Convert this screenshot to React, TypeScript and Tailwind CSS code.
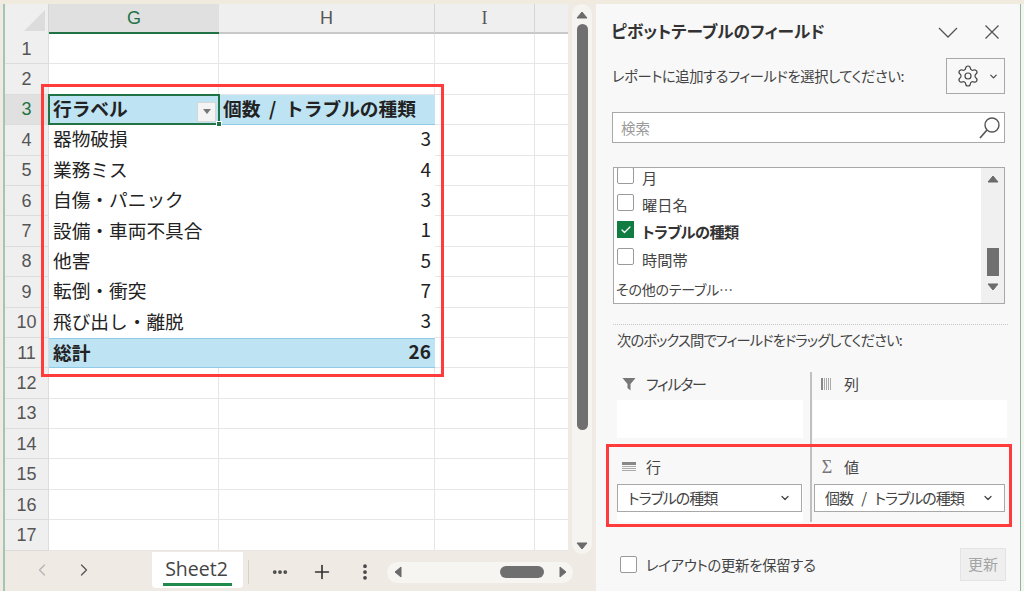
import React from "react";
import { ChevronDown, ChevronLeft, ChevronRight, Plus, MoreVertical, MoreHorizontal, Settings, Check } from "lucide-react";

const font = "font-['Noto_Sans_CJK_JP','Noto_Sans',sans-serif]";
const rows: [string, string | null, "h" | "b" | "t" | ""][] = [
  ["", null, ""],
  ["", null, ""],
  ["行ラベル", "個数 / トラブルの種類", "h"],
  ["器物破損", "3", "b"],
  ["業務ミス", "4", "b"],
  ["自傷・パニック", "3", "b"],
  ["設備・車両不具合", "1", "b"],
  ["他害", "5", "b"],
  ["転倒・衝突", "7", "b"],
  ["飛び出し・離脱", "3", "b"],
  ["総計", "26", "t"],
  ["", null, ""],
  ["", null, ""],
  ["", null, ""],
  ["", null, ""],
  ["", null, ""],
  ["", null, ""],
];

function Tri({ d, className }: { d: "u" | "d" | "l" | "r"; className?: string }) {
  const p = { u: "M1 9 L6 3 L11 9 Z", d: "M1 3 L11 3 L6 9 Z", l: "M9 1 L9 11 L3 6 Z", r: "M3 1 L3 11 L9 6 Z" }[d];
  return (
    <svg width="12" height="12" viewBox="0 0 12 12" className={className}>
      <path d={p} fill="#6b6b6b" stroke="#6b6b6b" strokeLinejoin="round" />
    </svg>
  );
}

function Grid() {
  return (
    <div className="relative w-[563px] bg-white">
      <div className="flex h-[30px]">
        <div className="relative w-[44px] shrink-0 bg-[#efefef] border-r border-[#d5d5d5]">
          <svg width="21" height="21" viewBox="0 0 21 21" className="absolute right-[3px] bottom-[3px]">
            <path d="M21 0 V21 H0 Z" fill="#dcdcdc" />
          </svg>
        </div>
        <div className="w-[170px] shrink-0 flex items-center justify-center bg-[#e0e0e0] border-b-2 border-[#217346] text-[18px] text-[#217346] font-['Liberation_Sans']">G</div>
        <div className="w-[216px] shrink-0 flex items-center justify-center bg-[#efefef] border-b-2 border-[#c8c8c8] border-r border-r-[#d5d5d5] text-[18px] text-[#555] font-['Liberation_Sans']">H</div>
        <div className="w-[100px] shrink-0 flex items-center justify-center bg-[#efefef] border-b-2 border-[#c8c8c8] border-r border-r-[#d5d5d5] text-[18px] text-[#555] font-['Liberation_Serif']">I</div>
        <div className="flex-1 bg-[#efefef] border-b-2 border-[#c8c8c8]" />
      </div>
      {rows.map((r, i) => {
        const kind = r[2];
        const active = kind === "h";
        const gCell =
          kind === "h"
            ? "bg-[#bee3f3] font-bold border-b border-[#8fcbe6] pb-[2px]"
            : kind === "t"
              ? "bg-[#bee3f3] font-bold border-y border-[#8fcbe6] pb-[3px]"
              : kind === "b"
                ? "pb-[4px]"
                : "border-r border-b border-[#e6e6e6]";
        const hCell =
          kind === "h"
            ? "bg-[#bee3f3] font-bold justify-start pl-[4px] text-[18.7px] [word-spacing:4.5px] border-b border-[#8fcbe6] pb-[2px]"
            : kind === "t"
              ? "bg-[#bee3f3] font-bold justify-end pr-[4px] text-[19px] border-y border-[#8fcbe6] pb-[3px]"
              : kind === "b"
                ? "justify-end pr-[4px] text-[19px] pb-[4px]"
                : "border-r border-b border-[#e6e6e6]";
        return (
          <div key={i} className="flex h-[30.4px]">
            <div className={`w-[44px] shrink-0 flex items-center justify-center pt-[1px] border-b border-r border-[#dcdcdc] text-[18px] font-['Liberation_Sans'] ${active ? "bg-[#e0e0e0] text-[#217346] border-r-[#217346]" : "bg-[#efefef] text-[#555]"}`}>{i + 1}</div>
            <div className={`relative w-[170px] shrink-0 flex items-center pl-[4px] text-[18.7px] text-[#222] ${gCell} ${font}`}>
              {r[0]}
              {active && (
                <>
                  <div className="absolute inset-[-1px] border-2 border-[#217346] pointer-events-none" />
                  <div className="absolute right-[3px] top-[7px] flex h-[20px] w-[19px] items-center justify-center bg-[#f4f4f4] border border-[#d6d6d6]">
                    <svg width="8" height="5" viewBox="0 0 8 5"><path d="M0 0H8L4 5Z" fill="#777" /></svg>
                  </div>
                  <div className="absolute right-[-3px] bottom-[-3px] h-[6px] w-[6px] bg-[#217346] border border-white" />
                </>
              )}
            </div>
            <div className={`w-[216px] shrink-0 flex items-center text-[#222] whitespace-nowrap ${hCell} ${font}`}>{r[1]}</div>
            <div className="w-[100px] shrink-0 border-r border-b border-[#e6e6e6]" />
            <div className="flex-1 border-b border-[#e6e6e6]" />
          </div>
        );
      })}
      <div className="absolute left-[36px] top-[80px] h-[293px] w-[403px] border-[3px] border-[#ff3b3b] pointer-events-none" />
    </div>
  );
}

function TabBar() {
  return (
    <div className="flex h-[37px] w-[563px] items-start text-[#444]">
      <div className="flex w-[147px] shrink-0 items-center justify-start pl-[27px] gap-[22px] h-[34px] pt-[4px]">
        <ChevronLeft size={20} strokeWidth={1.5} className="text-[#b5b5b5]" />
        <ChevronRight size={20} strokeWidth={1.5} className="text-[#555]" />
      </div>
      <div className="mt-[1px] flex h-[36px] w-[91px] shrink-0 flex-col items-center rounded-b-[4px] bg-white">
        <span className="mt-[5px] text-[19.5px] leading-[24px] text-[#444] font-['Open_Sans'] -translate-x-[1px]">Sheet2</span>
        <div className="mt-[2px] h-[3px] w-[69px] bg-[#1f8a4c]" />
      </div>
      <div className="ml-[5px] mt-[9px] h-[24px] w-px shrink-0 bg-[#d4d0ca]" />
      <div className="ml-[22px] mt-[10px] flex shrink-0 items-center">
        <MoreHorizontal size={18} strokeWidth={3} className="text-[#444]" />
        <Plus size={22} strokeWidth={1.8} className="ml-[22px] text-[#333]" />
        <MoreVertical size={20} strokeWidth={2.5} className="ml-[22px] text-[#444]" />
      </div>
      <div className="ml-[12px] mt-[11px] flex h-[21px] w-[186px] shrink-0 items-center rounded-full bg-[#f7f5f2] pl-[5px] pr-[4px]">
        <Tri d="l" />
        <div className="ml-auto h-[12px] w-[44px] rounded-full bg-[#6f6f6f]" />
        <Tri d="r" className="ml-[13px]" />
      </div>
    </div>
  );
}

function VScroll() {
  return (
    <div className="flex h-[550px] w-[20px] shrink-0 flex-col items-center rounded-full bg-[#f6f4f1] pt-[5px] pb-[2px]">
      <Tri d="u" />
      <div className="mt-[3px] h-[406px] w-[11px] rounded-full bg-[#707070]" />
      <Tri d="d" className="mt-auto" />
    </div>
  );
}

function Cb({ checked, className }: { checked?: boolean; className?: string }) {
  return (
    <div className={`flex h-[17px] w-[17px] shrink-0 items-center justify-center border ${checked ? "bg-[#107c41] border-[#107c41]" : "bg-white border-[#9a9a9a] rounded-[2px]"} ${className ?? ""}`}>
      {checked && <Check size={12} strokeWidth={2.5} className="text-white" />}
    </div>
  );
}

function Select({ label, w }: { label: string; w: string }) {
  return (
    <div className={`flex h-[28px] items-center justify-between border border-[#a8a8a8] bg-white pl-[10px] pr-[10px] text-[15px] text-[#444] ${w}`}>
      <span className="whitespace-nowrap tracking-[-1px] [word-spacing:6px]">{label}</span>
      <ChevronDown size={12} strokeWidth={2.5} className="text-[#444]" />
    </div>
  );
}

function Head({ icon, label, pad }: { icon: React.ReactNode; label: string; pad: string }) {
  return (
    <div className={`flex h-[24px] items-center ${pad}`}>
      <div className="flex w-[14px] justify-center">{icon}</div>
      <span className="ml-[10px] text-[15px] tracking-[-1.2px]">{label}</span>
    </div>
  );
}

function Panel() {
  return (
    <div className={`flex h-[587px] w-[424px] shrink-0 flex-col bg-[#f8f8f8] pl-[15px] text-[#444] [font-feature-settings:'palt'] ${font}`}>
      <div className="mt-[16px] flex h-[24px] items-center justify-between pr-[18px]">
        <span className="text-[16.7px] font-bold text-[#333]">ピボットテーブルのフィールド</span>
        <div className="flex items-center gap-[24px]">
          <svg width="20" height="20" viewBox="0 0 20 20"><path d="M1 6 L10 15 L19 6" fill="none" stroke="#555" strokeWidth="1.3" /></svg>
          <svg width="20" height="20" viewBox="0 0 20 20"><path d="M3.5 3.5 L16.5 16.5 M16.5 3.5 L3.5 16.5" fill="none" stroke="#555" strokeWidth="1.3" /></svg>
        </div>
      </div>
      <div className="mt-[14px] flex h-[36px] items-center justify-between pr-[15px]">
        <span className="ml-[1px] text-[14.3px] tracking-[-0.4px] whitespace-nowrap">レポートに追加するフィールドを選択してください:</span>
        <div className="flex h-[36px] w-[59px] shrink-0 items-center justify-start gap-[8px] pl-[9px] border border-[#a8a8a8]">
          <Settings size={24} strokeWidth={1.2} className="text-[#444]" />
          <ChevronDown size={11} strokeWidth={2.5} className="text-[#444]" />
        </div>
      </div>
      <div className="ml-[1px] mr-[15px] mt-[18px] flex h-[31px] items-center justify-between border border-[#a8a8a8] bg-white pl-[8px] pr-[3px]">
        <span className="text-[14.5px] text-[#999]">検索</span>
        <svg width="24" height="24" viewBox="0 0 24 24">
          <circle cx="15" cy="9" r="7" fill="none" stroke="#555" strokeWidth="1.4" />
          <path d="M10 14 L3 22" fill="none" stroke="#555" strokeWidth="1.6" />
        </svg>
      </div>
      <div className="ml-[2px] mr-[15px] mt-[24px] flex h-[137px] overflow-hidden border border-[#a8a8a8] bg-white">
        <div className="flex-1 pl-[3px]">
          <div className="flex h-[27px] -mt-[6px] items-center">
            <Cb />
            <span className="ml-[8px] mt-[3px] text-[15.2px]">月</span>
          </div>
          <div className="flex h-[27px] items-center">
            <Cb />
            <span className="ml-[8px] mt-[4px] text-[15.2px]">曜日名</span>
          </div>
          <div className="flex h-[27px] items-center">
            <Cb checked />
            <span className="ml-[8px] mt-[4px] text-[15.2px] font-bold tracking-[-0.6px] text-[#333]">トラブルの種類</span>
          </div>
          <div className="flex h-[27px] items-center">
            <Cb />
            <span className="ml-[8px] mt-[5px] text-[15.2px]">時間帯</span>
          </div>
          <div className="mt-[7px] -ml-[1px] text-[14px] tracking-[-0.2px] leading-[24px]">その他のテーブル…</div>
        </div>
        <div className="flex w-[23px] flex-col items-center bg-[#f0f0f0] pt-[5px]">
          <Tri d="u" />
          <div className="mt-[63px] h-[28px] w-[12px] bg-[#707070]" />
          <Tri d="d" className="mt-[5px]" />
        </div>
      </div>
      <div className="ml-[2px] mr-[12px] mt-[20px] border-t border-dotted border-[#c8c8c8]" />
      <div className="mt-[4px] pl-[6px] text-[14.3px] tracking-[-0.9px] leading-[22px] whitespace-nowrap">次のボックス間でフィールドをドラッグしてください:</div>
      <div className="ml-[6px] mt-[21px] flex">
        <div className="w-[186px] shrink-0">
          <Head pad="pl-[5px]" icon={<svg width="14" height="14" viewBox="0 0 14 14"><path d="M0.5 1H13.5L8.5 7V13.5L5.5 11V7Z" fill="#777" /></svg>} label="フィルター" />
          <div className="mt-[4px] h-[38px] bg-white" />
          <div className="mt-[17px]">
            <Head pad="pl-[5px]" icon={<svg width="14" height="12" viewBox="0 0 14 12"><rect width="14" height="3" y="1" fill="#888" /><rect width="14" height="1" y="5" fill="#aaa" /><rect width="14" height="1" y="7" fill="#aaa" /><rect width="14" height="1" y="9" fill="#aaa" /></svg>} label="行" />
          </div>
          <div className="mt-[5px] bg-white pb-[10px]"><Select label="トラブルの種類" w="w-[185px]" /></div>
        </div>
        <div className="ml-[7px] w-[2px] h-[150px] bg-[#c0c0c0] shrink-0" />
        <div className="ml-[1px] w-[194px] shrink-0">
          <Head pad="pl-[7px]" icon={<svg width="14" height="12" viewBox="0 0 14 12"><rect x="1" width="2" height="12" fill="#888" /><rect x="4" width="1" height="12" fill="#aaa" /><rect x="6" width="1" height="12" fill="#aaa" /><rect x="8" width="1" height="12" fill="#aaa" /><rect x="10" width="1" height="12" fill="#aaa" /></svg>} label="列" />
          <div className="mt-[4px] h-[38px] bg-white" />
          <div className="mt-[17px]">
            <Head pad="pl-[7px]" icon={<span className="text-[18px] leading-[14px] text-[#777] font-['Liberation_Serif']">Σ</span>} label="値" />
          </div>
          <div className="ml-[1px] mt-[5px]"><Select label="個数 / トラブルの種類" w="w-[191px]" /></div>
        </div>
      </div>
      <div className="mt-[26px] flex items-center">
        <Cb className="ml-[9px]" />
        <span className="ml-[9px] text-[14.3px] tracking-[-0.2px]">レイアウトの更新を保留する</span>
        <div className="ml-auto mr-[14px] flex h-[33px] w-[46px] items-center justify-center border border-[#e4e4e4] bg-[#efefef] text-[15px] text-[#a5a5a5]">更新</div>
      </div>
    </div>
  );
}

export default function App() {
  return (
    <div className={`relative flex h-[591px] w-[1024px] flex-col overflow-hidden bg-[#efeae4] ${font}`}>
      <div className="h-[4px] bg-[#f1ebdf]" />
      <div className="flex flex-1 min-h-0">
        <div className="ml-[3px] h-full w-[2px] shrink-0 bg-[#a3c6ae]" />
        <div className="flex flex-col w-[563px] shrink-0">
          <Grid />
          <TabBar />
        </div>
        <div className="ml-[4px]"><VScroll /></div>
        <div className="ml-[4px] shrink-0"><Panel /></div>
        <div className="flex-1 bg-[#f4f4f2] border-l border-[#8db89a]" />
      </div>
      <div className="absolute left-[606px] top-[444px] h-[83px] w-[406px] border-[3px] border-[#ff3b3b] pointer-events-none" />
    </div>
  );
}
